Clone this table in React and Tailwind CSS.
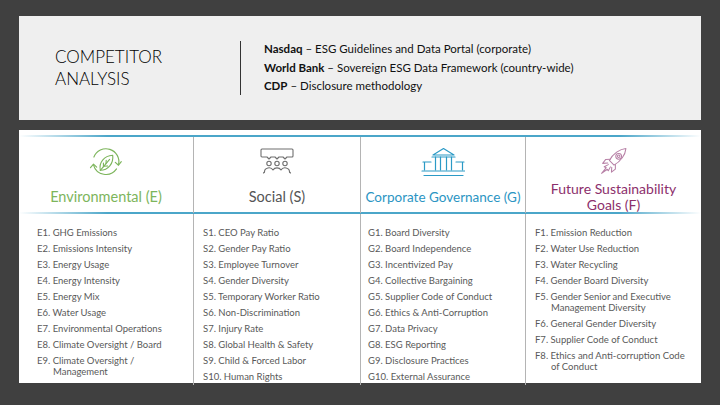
// App.jsx
const columns = [
  {
    key: "E",
    title: ["Environmental (E)"],
    titleColor: "text-[#7db55c] text-[14.5px]",
    pad: "pl-[18px]",
    items: [
      "E1. GHG Emissions",
      "E2. Emissions Intensity",
      "E3. Energy Usage",
      "E4. Energy Intensity",
      "E5. Energy Mix",
      "E6. Water Usage",
      "E7. Environmental Operations",
      "E8. Climate Oversight / Board",
      "E9. Climate Oversight / Management",
    ],
  },
  {
    key: "S",
    title: ["Social (S)"],
    titleColor: "text-[#555555] text-[14.5px]",
    pad: "pl-[9px]",
    items: [
      "S1. CEO Pay Ratio",
      "S2. Gender Pay Ratio",
      "S3. Employee Turnover",
      "S4. Gender Diversity",
      "S5. Temporary Worker Ratio",
      "S6. Non-Discrimination",
      "S7. Injury Rate",
      "S8. Global Health & Safety",
      "S9. Child & Forced Labor",
      "S10. Human Rights",
    ],
  },
  {
    key: "G",
    title: ["Corporate Governance (G)"],
    titleColor: "text-[#2b95c3] text-[13.5px]",
    pad: "pl-[7px]",
    items: [
      "G1. Board Diversity",
      "G2. Board Independence",
      "G3. Incentivized Pay",
      "G4. Collective Bargaining",
      "G5. Supplier Code of Conduct",
      "G6. Ethics & Anti-Corruption",
      "G7. Data Privacy",
      "G8. ESG Reporting",
      "G9. Disclosure Practices",
      "G10. External Assurance",
    ],
  },
  {
    key: "F",
    title: ["Future Sustainability", "Goals (F)"],
    titleColor: "text-[#8c2f6c] text-[14px]",
    pad: "pl-[9px]",
    items: [
      "F1. Emission Reduction",
      "F2. Water Use Reduction",
      "F3. Water Recycling",
      "F4. Gender Board Diversity",
      "F5. Gender Senior and Executive Management Diversity",
      "F6. General Gender Diversity",
      "F7. Supplier Code of Conduct",
      "F8. Ethics and Anti-corruption Code of Conduct",
    ],
  },
];

function EnvIcon() {
  return (
    <svg width="42" height="31" viewBox="0 0 40 30" fill="none" stroke="#7db55c" strokeWidth="1.1" strokeLinecap="round" strokeLinejoin="round">
      {/* cycle arrows */}
      <path d="M8.3 10.7 A12.5 12.5 0 0 1 32.1 18.2" />
      <path d="M29 15.8 L32.1 18.6 L34.8 15.2" />
      <path d="M30.2 22.2 A12.5 12.5 0 0 1 7.9 18.2" />
      <path d="M5 21 L7.9 17.6 L11 20.4" />
      {/* leaf */}
      <path d="M14.5 23.5 C13 16 18 9.5 26.5 9 C27.5 17 22 23.5 14.5 23.5 Z" />
      <path d="M14.5 23.5 L23.5 13" />
      <path d="M17.5 20 L17.5 16.5 M20 17 L20.2 13.8 M18 19.5 L21.5 19.3" />
    </svg>
  );
}

function SocialIcon() {
  return (
    <svg width="34" height="27" viewBox="0 0 34 27" fill="none" stroke="#6f6f6f" strokeWidth="1.1" strokeLinejoin="round" strokeLinecap="round">
      <path d="M2 1 H32 A1 1 0 0 1 33 2 V8 A1 1 0 0 1 32 9 H27 L25 11 L23 9 H19 L17 11 L15 9 H11 L9 11 L7 9 H2 A1 1 0 0 1 1 8 V2 A1 1 0 0 1 2 1 Z" />
      <circle cx="9" cy="15.5" r="2.2" />
      <circle cx="17" cy="15.5" r="2.2" />
      <circle cx="25" cy="15.5" r="2.2" />
      <path d="M4.5 24 A4.5 4 0 0 1 13 22 A4.5 4 0 0 1 21 22 A4.5 4 0 0 1 29.5 24" />
      <path d="M3.5 25 L4.5 24 M29.5 24 L30.5 25" />
    </svg>
  );
}

function GovIcon() {
  return (
    <svg width="44" height="30" viewBox="0 0 44 30" fill="none" stroke="#2b9ac6" strokeWidth="1.2" strokeLinejoin="round" strokeLinecap="round">
      <path d="M12 8 L22.5 1.5 L33 8 Z" />
      <path d="M11 10 H34" />
      <path d="M14.5 10 V23 M19.5 10 V23 M25.5 10 V23 M30.5 10 V23" />
      <path d="M2 15 H10 M3.5 15 V23" />
      <path d="M35 15 H43 M41.5 15 V23" />
      <path d="M1 24 H44" />
      <path d="M3 28.5 H42" />
    </svg>
  );
}

function RocketIcon() {
  return (
    <svg width="31" height="31" viewBox="0 0 30 30" fill="none" stroke="#b780a6" strokeWidth="1" strokeLinejoin="round" strokeLinecap="round">
      <path d="M27 2.5 C21 3 14.5 7.5 11 14 L15.5 18.5 C22 15 26.5 8.5 27 2.5 Z" />
      <circle cx="20" cy="10" r="2.8" />
      <circle cx="20" cy="10" r="1.2" />
      <path d="M11.8 12.8 L7.5 13 L4.5 16.8 L9.5 16.5" />
      <path d="M16.8 17.8 L16.8 22.3 L13 25.3 L13.3 20.5" />
      <path d="M10 18 L6 20 L8 21 L3.5 26.5 L9 22.5 L10 24 L12 20.2" />
    </svg>
  );
}

const icons = { E: <EnvIcon />, S: <SocialIcon />, G: <GovIcon />, F: <RocketIcon /> };
const dividers = ["", "border-l border-[#b4b4b4]", "border-l border-[#b4b4b4]", "border-l border-[#b4b4b4]"];
const lineGradient =
  "h-[2px] bg-[linear-gradient(90deg,#ffffff_0%,#4ba6c9_13%,#4ba6c9_88%,#ffffff_100%)]";

export default function App() {
  return (
    <div className="w-[720px] h-[405px] bg-[#404040] pt-[16px] px-[19px] font-['Lato',sans-serif] overflow-hidden">
      {/* title band */}
      <div className="h-[104px] bg-[#efefef] flex items-center pl-[36px]">
        <div className="w-[185px] text-[17px] leading-[22px] font-light text-[#000]">
          <div>COMPETITOR</div>
          <div>ANALYSIS</div>
        </div>
        <div className="w-px h-[54px] bg-[#333]" />
        <div className="ml-[23px] text-[11.5px] leading-[18.5px] text-[#111]">
          <div>
            <span className="font-bold">Nasdaq</span> – ESG Guidelines and Data Portal (corporate)
          </div>
          <div>
            <span className="font-bold">World Bank</span> – Sovereign ESG Data Framework (country-wide)
          </div>
          <div>
            <span className="font-bold">CDP</span> – Disclosure methodology
          </div>
        </div>
      </div>

      {/* ESG framework table */}
      <div className="mt-[10px] h-[253px] bg-white pt-[5px]">
        <div className={lineGradient} />
        <div className="grid grid-cols-[174px_167px_165px_176px] h-[75px]">
          {columns.map((col, i) => (
            <div key={col.key} className={`flex flex-col items-center pt-[9px] ${dividers[i]}`}>
              <div className="h-[31px] flex items-center justify-center">{icons[col.key]}</div>
              <div className={`mt-[4px] h-[32px] flex flex-col items-center justify-center leading-[16px] ${col.titleColor}`}>
                {col.title.map((t) => (
                  <div key={t}>{t}</div>
                ))}
              </div>
            </div>
          ))}
        </div>
        <div className={lineGradient} />
        <div className="grid grid-cols-[174px_167px_165px_176px] h-[171px]">
          {columns.map((col, i) => (
            <div key={col.key} className={`${col.pad} pt-[13px] ${dividers[i]}`}>
              <ul className="flex flex-col gap-[5px] text-[9.5px] leading-[11px] text-[#595959]">
                {col.items.map((item) => (
                  <li key={item} className="pl-4 -indent-4 pr-[6px]">
                    {item}
                  </li>
                ))}
              </ul>
            </div>
          ))}
        </div>
      </div>
    </div>
  );
}
